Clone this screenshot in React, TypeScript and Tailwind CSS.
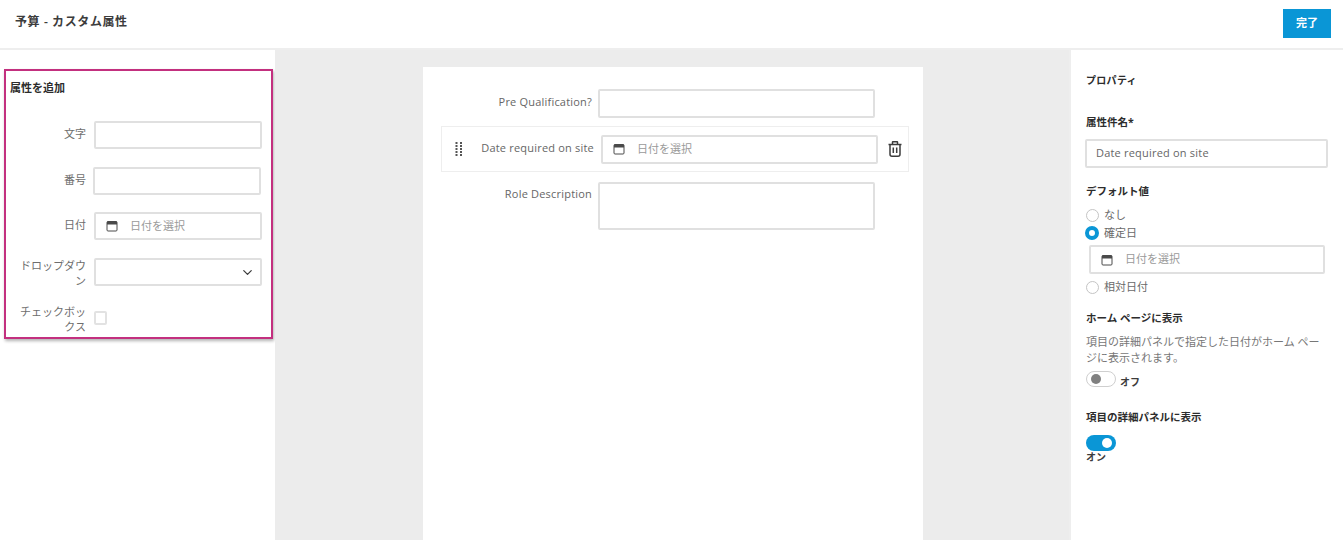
import { ChevronDown } from "lucide-react";

const font = { fontFamily: '"Open Sans", "Noto Sans CJK JP", sans-serif' };

function CalendarIcon() {
  return (
    <svg width="12" height="12" viewBox="0 0 12 12" className="shrink-0" aria-hidden>
      <rect x="1" y="1.5" width="10" height="9.5" rx="1" fill="none" stroke="#4a4a4a" strokeWidth="1" />
      <rect x="1" y="1.5" width="10" height="3" fill="#4a4a4a" />
    </svg>
  );
}

function TrashIcon() {
  return (
    <svg width="14" height="16" viewBox="0 0 14 16" aria-hidden fill="none" stroke="#3c3c3c" strokeWidth="1.5">
      <path d="M0.5 3.5h13" />
      <path d="M4.5 3V1.2a.5.5 0 0 1 .5-.5h4a.5.5 0 0 1 .5.5V3" />
      <path d="M2 3.5v9.7a2 2 0 0 0 2 2h6a2 2 0 0 0 2-2V3.5" />
      <path d="M5.3 6.5v5.5M8.7 6.5v5.5" />
    </svg>
  );
}

function GripIcon() {
  return (
    <svg width="8" height="14" viewBox="0 0 8 14" aria-hidden fill="#555">
      {[1, 4, 7, 10, 13].map((y) => (
        <g key={y}>
          <rect x="0.5" y={y - 1} width="2" height="2" />
          <rect x="5" y={y - 1} width="2" height="2" />
        </g>
      ))}
    </svg>
  );
}

function DateField({ className }: { className: string }) {
  return (
    <div className={`flex items-center gap-[12px] border-2 border-[#e0e0e0] bg-white rounded-[2px] text-[11px] text-[#9a9a9a] ${className}`}>
      <CalendarIcon />
      <span>日付を選択</span>
    </div>
  );
}

function Radio({ label, checked }: { label: string; checked?: boolean }) {
  return (
    <div className="flex items-center h-[18px] text-[11px] text-[#6a6a6a]">
      {checked ? (
        <span className="-ml-[1px] mr-[5px] w-[14px] h-[14px] rounded-full border-[4px] border-[#0a96d6] bg-white" />
      ) : (
        <span className="mr-[5px] w-[13px] h-[13px] rounded-full border border-[#c4c4c4] bg-white" />
      )}
      <span>{label}</span>
    </div>
  );
}

function LeftRow({
  label,
  children,
  className,
  labelClass = "pt-[4px] leading-[18px]",
}: {
  label: string;
  children: React.ReactNode;
  className: string;
  labelClass?: string;
}) {
  return (
    <div className={`flex items-start ${className}`}>
      <div className={`w-[76px] mr-[8px] text-right text-[11px] text-[#6e6e6e] shrink-0 ${labelClass}`}>{label}</div>
      {children}
    </div>
  );
}

export default function App() {
  return (
    <div className="w-[1343px] h-[540px] overflow-hidden bg-white flex flex-col" style={font}>
      <header className="h-[50px] shrink-0 flex items-start justify-between border-b-2 border-[#eeeeee] pl-[15px] pr-[12px]">
        <h1 className="text-[12px] font-semibold text-[#3c3c3c] mt-[13px] leading-[18px] tracking-[0.6px]">予算 - カスタム属性</h1>
        <button className="mt-[9px] w-[48px] h-[29px] bg-[#0a96d6] text-white text-[11px] font-semibold">完了</button>
      </header>
      <div className="flex flex-1 min-h-0">
        <aside className="w-[275px] shrink-0 pl-[4px] pt-[19px]">
          <div className="w-[269px] h-[270px] border-[2px] border-[#c3307f] shadow-[1px_2px_3px_rgba(0,0,0,0.3)] pl-[4px] pt-[10px]">
            <div className="text-[11px] font-bold text-[#2c2c2c] leading-[14px]">属性を追加</div>
            <div className="mt-[26px]">
              <LeftRow label="文字" className="h-[46px]">
                <div className="w-[168px] h-[28px] border-2 border-[#e0e0e0] rounded-[2px]" />
              </LeftRow>
              <LeftRow label="番号" className="h-[45px]">
                <div className="w-[168px] h-[28px] border-2 border-[#e0e0e0] rounded-[2px] -ml-[1px]" />
              </LeftRow>
              <LeftRow label="日付" className="h-[46px]">
                <DateField className="w-[168px] h-[28px] pl-[10px]" />
              </LeftRow>
              <LeftRow label="ドロップダウン" className="h-[46px]" labelClass="leading-[15px]">
                <div className="w-[168px] h-[28px] border-2 border-[#e0e0e0] rounded-[2px] flex items-center justify-end pr-[5px]">
                  <ChevronDown size={15} strokeWidth={2} color="#3c3c3c" />
                </div>
              </LeftRow>
              <LeftRow label="チェックボックス" className="h-[40px]" labelClass="leading-[15px]">
                <div className="w-[13px] h-[14px] mt-[7px] border-2 border-[#e2e2e2] rounded-[2px]" />
              </LeftRow>
            </div>
          </div>
        </aside>
        <main className="flex-1 bg-[#ececec] pl-[148px] pt-[17px]">
          <div className="w-[500px] h-[480px] bg-white pl-[18px] pt-[22px]">
            <div className="flex items-start h-[37px]">
              <div className="w-[151px] text-right text-[11px] leading-[16px] font-medium tracking-[0.2px] text-[#666] pt-[5px]">Pre Qualification?</div>
              <div className="ml-[6px] w-[277px] h-[29px] border-2 border-[#e0e0e0] rounded-[2px]" />
            </div>
            <div className="flex items-center w-[468px] h-[46px] border border-[#eeeeee] pl-[13px]">
              <GripIcon />
              <div className="w-[131px] text-right text-[11px] font-medium tracking-[0.2px] text-[#666] mb-[2px]">Date required on site</div>
              <DateField className="ml-[7px] w-[277px] h-[29px] pl-[10px]" />
              <div className="ml-[10px]">
                <TrashIcon />
              </div>
            </div>
            <div className="flex items-start mt-[10px]">
              <div className="w-[151px] text-right text-[11px] leading-[16px] font-medium tracking-[0.2px] text-[#666] pt-[4px]">Role Description</div>
              <div className="ml-[6px] w-[277px] h-[48px] border-2 border-[#e0e0e0] rounded-[2px]" />
            </div>
          </div>
        </main>
        <aside className="w-[274px] shrink-0 border-l-2 border-[#eeeeee] pl-[15px] pr-[15px] pt-[23px]">
          <div className="text-[10px] font-bold text-[#2c2c2c] leading-[14px] tracking-[0.3px]">プロパティ</div>
          <div className="mt-[27px] text-[10.5px] font-bold text-[#2c2c2c] leading-[16px]">属性件名*</div>
          <div className="mt-[9px] -ml-[1px] w-[243px] h-[29px] border-2 border-[#e0e0e0] rounded-[2px] flex items-center pl-[9px] text-[11px] font-medium tracking-[0.2px] text-[#666]">Date required on site</div>
          <div className="mt-[16px] text-[10.5px] font-bold text-[#2c2c2c] leading-[14px]">デフォルト値</div>
          <div className="mt-[8px]">
            <Radio label="なし" />
            <Radio label="確定日" checked />
          </div>
          <DateField className="ml-[3px] w-[236px] h-[29px] pl-[10px] mt-[3px]" />
          <div className="mt-[4px]">
            <Radio label="相対日付" />
          </div>
          <div className="mt-[15px] text-[10.5px] font-bold text-[#2c2c2c] leading-[14px]">ホーム ページに表示</div>
          <p className="mt-[9px] w-[238px] text-[11px] leading-[16px] text-[#777]">項目の詳細パネルで指定した日付がホーム ページに表示されます。</p>
          <div className="flex items-start mt-[5px]">
            <div className="w-[30px] h-[16px] rounded-full border border-[#cfcfcf] flex items-center pl-[4px]">
              <span className="w-[10px] h-[10px] rounded-full bg-[#808080]" />
            </div>
            <span className="ml-[4px] mt-[4px] text-[10px] font-bold text-[#3c3c3c] leading-[14px]">オフ</span>
          </div>
          <div className="mt-[21px] text-[10.5px] font-bold text-[#2c2c2c] leading-[14px]">項目の詳細パネルに表示</div>
          <div className="mt-[11px] w-[30px] h-[16px] rounded-full bg-[#0a96d6] flex items-center justify-end pr-[4px]">
            <span className="w-[10px] h-[10px] rounded-full bg-white" />
          </div>
          <div className="-mt-[1px] text-[10px] font-bold text-[#3c3c3c] leading-[14px]">オン</div>
        </aside>
      </div>
    </div>
  );
}
